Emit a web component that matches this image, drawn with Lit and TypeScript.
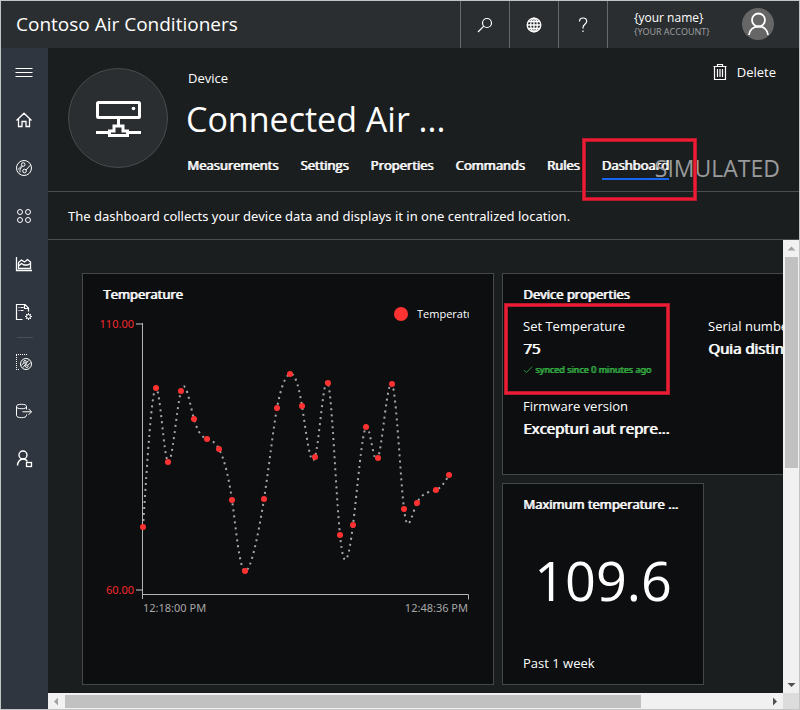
import { LitElement, html, css, svg, nothing } from "lit";
import { customElement } from "lit/decorators.js";

type Point = [number, number];

const READINGS: Point[] = [
  [60, 213], [73, 74], [85, 148], [98, 77], [111, 105], [124, 125],
  [136, 135], [149, 186], [162, 257], [181, 185], [194, 94], [207, 60],
  [219, 92], [232, 143], [245, 69], [257, 221], [270, 211], [283, 113],
  [295, 144], [309, 70], [321, 195], [334, 189], [353, 176], [366, 161],
];

/** First and second Bézier handles of a natural cubic spline, for one axis. */
function handles(x: number[]): [number[], number[]] {
  const n = x.length - 1;
  const a = new Array<number>(n);
  const b = new Array<number>(n);
  const r = new Array<number>(n);
  a[0] = 0;
  b[0] = 2;
  r[0] = x[0] + 2 * x[1];
  for (let i = 1; i < n - 1; i++) {
    a[i] = 1;
    b[i] = 4;
    r[i] = 4 * x[i] + 2 * x[i + 1];
  }
  a[n - 1] = 2;
  b[n - 1] = 7;
  r[n - 1] = 8 * x[n - 1] + x[n];
  for (let i = 1; i < n; i++) {
    const m = a[i] / b[i - 1];
    b[i] -= m;
    r[i] -= m * r[i - 1];
  }
  a[n - 1] = r[n - 1] / b[n - 1];
  for (let i = n - 2; i >= 0; i--) a[i] = (r[i] - a[i + 1]) / b[i];
  b[n - 1] = (x[n] + a[n - 1]) / 2;
  for (let i = 0; i < n - 1; i++) b[i] = 2 * x[i + 1] - a[i + 1];
  return [a, b];
}

function splinePath(points: Point[]): string {
  const [ax, bx] = handles(points.map((p) => p[0]));
  const [ay, by] = handles(points.map((p) => p[1]));
  let d = `M${points[0][0]} ${points[0][1]}`;
  for (let i = 1; i < points.length; i++) {
    const k = i - 1;
    d += `C${ax[k]} ${ay[k]} ${bx[k]} ${by[k]} ${points[i][0]} ${points[i][1]}`;
  }
  return d;
}

const icons = {
  menu: svg`<path d="M1.5 6.5h17M1.5 10.5h17M1.5 14.5h17" />`,
  home: svg`<path stroke-width="1.300" d="M2.500 10.500L10 3.200l7.500 7.300M4.500 8.800v7.700h3.500v-5h4v5h3.500v-7.700" />`,
  explorer: svg`<circle cx="10" cy="10" r="7.500" /><circle cx="9.200" cy="6.500" r="1.800" /><circle cx="10.500" cy="13" r="1.800" /><path d="M7.800 7.800L4 11.500M8.500 8.300c-2 2-3 3.500-2.500 6M12 12l4.500-5" />`,
  sets: svg`<circle cx="6" cy="6" r="2.500" /><circle cx="14" cy="6" r="2.500" /><circle cx="6" cy="14" r="2.500" /><circle cx="14" cy="14" r="2.500" />`,
  analytics: svg`<path stroke-width="1.300" d="M2.500 3v13.500H18" /><path stroke-width="1.300" d="M4.500 14.500V8.500l3-2.500 3 2 3-2.500 3 2.500v6.500zM4.500 12l3-2.500 2.500 1.500 3.500 0 3-1.500" />`,
  jobs: svg`<path stroke-width="1.200" d="M8.500 17.500h-6v-15h8.500l3.500 3.500v3.500M10.500 2.500v4h4M4.500 5.500h1M6.500 5.500h3M4.500 8.500h1M6.500 8.500h3" /><circle cx="14.500" cy="14.500" r="2" /><path d="M14.500 11v1.500M14.500 16.500v1.500M11 14.500h1.500M16.500 14.500h1.500M12 12l1 1M16 16l1 1M17 12l-1 1M13 16l-1 1" />`,
  template: svg`<path stroke-dasharray="1 1" d="M2.500 2v15M2 1.500h12M2 16.500h4" /><circle cx="12" cy="11" r="5.500" /><circle cx="11" cy="8.800" r="1.300" /><circle cx="12.800" cy="13.200" r="1.300" /><path d="M10 9.800L7.500 12.200M14 12.200l2.700-2.700M14.500 7.500L9 14.500" />`,
  exporter: svg`<ellipse cx="7.500" cy="5.500" rx="5" ry="2.200" /><path d="M2.500 5.500v9c0 1.200 2.200 2.200 5 2.200s5-1 5-2.200v-1M12.500 5.500v3" /><path d="M8.500 10.800h9M14.500 7.800l3 3-3 3" />`,
  admin: svg`<circle cx="9" cy="6" r="4" stroke-width="1.400" /><path stroke-width="1.400" d="M3.500 16.500c0-3.500 2.300-6.500 5.500-6.500 2 0 3.500 1 4.300 2.500" /><rect x="12.500" y="13.500" width="5" height="4" stroke-width="1.300" />`,
  search: svg`<circle cx="12" cy="8" r="4.500" stroke-width="1.200" /><path stroke-width="1.200" d="M8.800 11.200L3 17" />`,
  globe: svg`<g stroke-width="1.300"><circle cx="10" cy="10" r="6.800" /><ellipse cx="10" cy="10" rx="3.300" ry="6.800" /><path d="M10 3v14M3 10h14M4 6.500h12M4 13.500h12" /></g>`,
  help: svg`<path stroke-width="1.200" d="M6.500 6.500c0-2.200 1.500-3.500 3.500-3.500s3.700 1.300 3.700 3.300c0 3-3.700 3-3.700 6.200v1M10 15.500v1.500" />`,
  trash: svg`<path stroke-width="1.200" d="M3.500 4.500h13M7.500 4.500v-2h5v2M4.500 4.500v13h11v-13M7.500 7v8M10 7v8M12.500 7v8" />`,
  check: svg`<path d="M1 6l3 3 7-7" />`,
};

const NAV = [
  { name: "Menu", icon: icons.menu },
  { name: "Home", icon: icons.home },
  { name: "Device explorer", icon: icons.explorer },
  { name: "Device sets", icon: icons.sets },
  { name: "Analytics", icon: icons.analytics },
  { name: "Jobs", icon: icons.jobs },
  { name: "Device templates", icon: icons.template, divided: true },
  { name: "Continuous data export", icon: icons.exporter },
  { name: "Administration", icon: icons.admin },
];

const TABS = ["Measurements", "Settings", "Properties", "Commands", "Rules", "Dashboard"];

@customElement("app-icon")
export class AppIcon extends LitElement {
  static properties = { shape: { attribute: false } };
  declare shape: unknown;

  static styles = css`
    :host {
      display: block;
      width: 20px;
      height: 20px;
    }
    svg {
      display: block;
      width: 100%;
      height: 100%;
      fill: none;
      stroke: currentColor;
      stroke-width: 1;
    }
  `;

  render() {
    return html`<svg viewBox="0 0 20 20" aria-hidden="true">${this.shape}</svg>`;
  }
}

@customElement("temperature-chart")
export class TemperatureChart extends LitElement {
  static styles = css`
    :host {
      display: block;
    }
    .plot {
      display: block;
      width: 100%;
      font-family: "Noto Sans", sans-serif;
      font-size: 11px;
    }
    .axis {
      fill: none;
      stroke: #b4b4b4;
    }
    .tick {
      stroke: #6c6c6c;
      stroke-width: 2;
    }
    .curve {
      fill: none;
      stroke: #a6a6a6;
      stroke-width: 2;
      stroke-dasharray: 2 4;
    }
    .dot {
      fill: #ff3232;
    }
    .scale {
      fill: #f5282d;
      text-anchor: end;
    }
    .time {
      fill: #a6a6a6;
    }
    .end {
      text-anchor: end;
    }
    .legend {
      fill: #fff;
      font-family: "Open Sans", sans-serif;
    }
  `;

  render() {
    return html`
      <svg class="plot" viewBox="0 -10 410 370" role="img" aria-label="Temperature over time">
        <path class="tick" d="M53 10h6M53 276h6" />
        <text class="scale" x="51" y="14">110.00</text>
        <text class="scale" x="51" y="280">60.00</text>
        <path class="curve" d=${splinePath(READINGS)} />
        <path class="axis" d="M59.500 9v276M59.500 280.500h326v5" />
        ${READINGS.map(([x, y]) => svg`<circle class="dot" cx=${x} cy=${y} r="3" />`)}
        <text class="time" x="60" y="298">12:18:00 PM</text>
        <text class="time end" x="385" y="298">12:48:36 PM</text>
        <circle class="dot" cx="318" cy="0" r="7" />
        <svg x="334" y="-10" width="52" height="20">
          <text class="legend" x="0" y="14">Temperature</text>
        </svg>
      </svg>
    `;
  }
}

@customElement("app-root")
export class AppRoot extends LitElement {
  static styles = css`
    :host {
      display: grid;
      grid-template: 47px minmax(0, 1fr) / 47px minmax(0, 1fr);
      box-sizing: border-box;
      height: 100vh;
      overflow: hidden;
      border: 1px solid #c3c5c5;
      background: #1b1e1f;
      color: #fff;
      font: 13px/20px "Open Sans", "Noto Sans", sans-serif;
    }
    button {
      display: grid;
      place-items: center;
      padding: 0;
      border: 0;
      background: none;
      color: inherit;
      font: inherit;
    }
    h1,
    h2,
    p,
    dl,
    dd {
      margin: 0;
      font-weight: 400;
    }
    a {
      color: inherit;
      text-decoration: none;
    }
    .strong {
      text-shadow: 1px 0 0 currentColor;
    }

    .topbar {
      grid-column: 1 / -1;
      display: flex;
      background: #2b2e30;
    }
    .brand {
      flex: 1;
      padding-left: 15px;
      font-size: 19px;
      line-height: 47px;
    }
    .tool {
      width: 49px;
      border-left: 1px solid #666a6b;
    }
    .account {
      display: flex;
      align-items: center;
      justify-content: space-between;
      box-sizing: border-box;
      width: 192px;
      padding: 0 25px 2px 26px;
      border-left: 1px solid #666a6b;
    }
    .user {
      font-size: 12px;
      line-height: 16px;
    }
    .tenant {
      color: #a0a2a3;
      font-size: 9px;
      line-height: 12px;
    }
    .avatar {
      width: 32px;
      height: 32px;
    }

    .sidebar {
      background: #30363f;
    }
    .nav-item {
      width: 46px;
      height: 48px;
    }
    .divider {
      width: 16px;
      margin: 1px auto;
      border: 0;
      border-top: 1px solid #4b4f55;
    }

    .page {
      display: grid;
      grid-template-rows: auto auto minmax(0, 1fr);
    }
    .device {
      position: relative;
      display: flex;
      gap: 18px;
      height: 143px;
      padding-left: 20px;
      border-bottom: 1px solid #4b4e4f;
    }
    .picture {
      width: 100px;
      height: 100px;
      margin-top: 20px;
    }
    .summary {
      padding-top: 20px;
    }
    .kind {
      padding-left: 2px;
    }
    .name {
      font-size: 34px;
      line-height: 62px;
    }
    .tabs {
      display: flex;
      gap: 22px;
      padding: 5px 0 0 1px;
    }
    .tab {
      position: relative;
      padding-bottom: 3px;
    }
    .current {
      border-bottom: 2px solid #1565f0;
    }
    .delete {
      position: absolute;
      top: 14px;
      right: 23px;
      display: flex;
      align-items: center;
      gap: 7px;
    }
    .simulated {
      position: absolute;
      right: 19px;
      bottom: 8px;
      color: #999b9c;
      font-size: 23px;
      line-height: 30px;
    }
    .intro {
      padding: 14px 20px 13px;
      border-bottom: 1px solid #4b4e4f;
      font-family: "Noto Sans", sans-serif;
    }

    .callout {
      position: absolute;
      z-index: 1;
      box-sizing: border-box;
      border: 1px solid #b5192c;
      box-shadow: inset 0 0 0 2px #ed1b34, inset 0 0 0 3px #b5192c;
      pointer-events: none;
    }
    .around-tab {
      inset: -17px -28px -23px -20px;
    }
    .around-value {
      inset: -12px 38px 0 -19px;
    }

    .viewport {
      display: grid;
      grid-template: minmax(0, 1fr) 16px / minmax(0, 1fr) 16px;
    }
    .board {
      display: grid;
      grid-template: repeat(2, 202px) / repeat(4, 202px);
      gap: 8px;
      overflow: hidden;
      padding: 33px 34px;
    }
    .tile {
      display: flex;
      flex-direction: column;
      box-sizing: border-box;
      border: 1px solid #444748;
      background: #0c0e10;
    }
    .tile-title {
      padding: 10px 20px 0;
      font-size: 13px;
      line-height: 20px;
    }
    .large {
      grid-area: span 2 / span 2;
    }
    .wide {
      grid-column: span 2;
    }
    .properties {
      display: grid;
      grid-template-columns: repeat(2, 185px);
      grid-auto-rows: 80px;
      padding: 11px 0 0 20px;
    }
    .property {
      position: relative;
    }
    dt,
    dd {
      line-height: 22px;
    }
    .value {
      font-size: 15px;
    }
    .sync {
      display: flex;
      align-items: center;
      gap: 2px;
      color: #35b044;
      font-family: "Noto Sans", sans-serif;
      font-size: 9px;
    }
    .check {
      width: 10px;
      height: 10px;
      fill: none;
      stroke: currentColor;
    }
    .figure {
      flex: 1;
      display: grid;
      place-items: center;
      padding-bottom: 8px;
      font-size: 54px;
    }
    .span {
      padding: 0 20px 11px;
    }

    .bar {
      display: flex;
      align-items: center;
      justify-content: space-between;
      background: #f1f1f1;
    }
    .upright {
      flex-direction: column;
    }
    .track {
      flex: 1;
      align-self: stretch;
      display: grid;
    }
    .across .track {
      grid-template-columns: 576fr 125fr;
      padding: 2px 0 1px;
    }
    .upright .track {
      grid-template-rows: 212fr 208fr;
      padding: 0 1px 0 2px;
    }
    .thumb {
      background: #c1c1c1;
    }
    .step {
      width: 17px;
      height: 17px;
      color: #505050;
    }
    .idle {
      color: #a3a3a3;
    }
    .arrow {
      width: 9px;
      height: 9px;
      fill: currentColor;
    }
    .corner {
      background: #dcdcdc;
    }
  `;

  private arrow(name: string, d: string, idle = false) {
    return html`<button class="step ${idle ? "idle" : ""}" aria-label=${name}>
      <svg class="arrow" viewBox="0 0 9 9" aria-hidden="true"><path d=${d} /></svg>
    </button>`;
  }

  render() {
    return html`
      <header class="topbar">
        <div class="brand">Contoso Air Conditioners</div>
        <button class="tool" aria-label="Search"><app-icon .shape=${icons.search}></app-icon></button>
        <button class="tool" aria-label="Language"><app-icon .shape=${icons.globe}></app-icon></button>
        <button class="tool" aria-label="Help"><app-icon .shape=${icons.help}></app-icon></button>
        <div class="account">
          <div>
            <div class="user">{your name}</div>
            <div class="tenant">{YOUR ACCOUNT}</div>
          </div>
          <svg class="avatar" viewBox="0 0 32 32" aria-hidden="true">
            <circle cx="16" cy="16" r="16" fill="#666" />
            <g fill="none" stroke="#fff" stroke-width="1.800">
              <circle cx="16.500" cy="12" r="6.500" />
              <path d="M7 27c.500-5 4-8.500 9.500-8.500s9 3.500 9.500 8.500" />
            </g>
          </svg>
        </div>
      </header>

      <nav class="sidebar" aria-label="Main">
        ${NAV.map(
          (item) => html`
            ${item.divided ? html`<hr class="divider" />` : nothing}
            <button class="nav-item" aria-label=${item.name}>
              <app-icon .shape=${item.icon}></app-icon>
            </button>
          `,
        )}
      </nav>

      <main class="page">
        <section class="device">
          <svg class="picture" viewBox="0 0 100 100" aria-hidden="true">
            <circle cx="50" cy="50" r="49.500" fill="#2b2e30" stroke="#494b4d" />
            <g fill="none" stroke="#fff" stroke-width="3">
              <rect x="29.500" y="34.500" width="42" height="15" rx="1" />
              <path d="M50.500 50v7M28 64.500h13M60 64.500h13M41.500 67.500v-4.500h4.500v-5h9v5h4.500v4.500z" />
            </g>
            <circle cx="65.500" cy="40.500" r="1.800" fill="#fff" />
          </svg>
          <div class="summary">
            <p class="kind">Device</p>
            <h1 class="name">Connected Air ...</h1>
            <nav class="tabs" aria-label="Device">
              ${TABS.map((name) =>
                name === "Dashboard"
                  ? html`<a class="tab strong current" href="#dashboard" aria-current="page"
                      >${name}<span class="callout around-tab"></span
                    ></a>`
                  : html`<a class="tab strong" href="#${name.toLowerCase()}">${name}</a>`,
              )}
            </nav>
          </div>
          <button class="delete"><app-icon .shape=${icons.trash}></app-icon>Delete</button>
          <div class="simulated">SIMULATED</div>
        </section>

        <p class="intro">
          The dashboard collects your device data and displays it in one centralized location.
        </p>

        <div class="viewport">
          <div class="board">
            <section class="tile large">
              <h2 class="tile-title strong">Temperature</h2>
              <temperature-chart></temperature-chart>
            </section>

            <section class="tile wide">
              <h2 class="tile-title strong">Device properties</h2>
              <dl class="properties">
                <div class="property">
                  <dt>Set Temperature</dt>
                  <dd class="value strong">75</dd>
                  <dd class="sync strong">
                    <svg class="check" viewBox="0 0 12 12" aria-hidden="true">${icons.check}</svg>
                    synced since 0 minutes ago
                  </dd>
                  <span class="callout around-value"></span>
                </div>
                <div class="property">
                  <dt>Serial number</dt>
                  <dd class="value strong">Quia distinctio</dd>
                </div>
                <div class="property">
                  <dt>Firmware version</dt>
                  <dd class="value strong">Excepturi aut repre...</dd>
                </div>
              </dl>
            </section>

            <section class="tile">
              <h2 class="tile-title strong">Maximum temperature ...</h2>
              <div class="figure">109.6</div>
              <p class="span">Past 1 week</p>
            </section>
          </div>

          <div class="bar upright">
            ${this.arrow("Scroll up", "M0.500 6.500h8l-4-4z", true)}
            <div class="track"><div class="thumb"></div></div>
            ${this.arrow("Scroll down", "M0.500 3h8l-4 4z")}
          </div>
          <div class="bar across">
            ${this.arrow("Scroll left", "M6 0.500v8l-4-4z", true)}
            <div class="track"><div class="thumb"></div></div>
            ${this.arrow("Scroll right", "M3 0.500v8l4-4z")}
          </div>
          <div class="corner"></div>
        </div>
      </main>
    `;
  }
}
